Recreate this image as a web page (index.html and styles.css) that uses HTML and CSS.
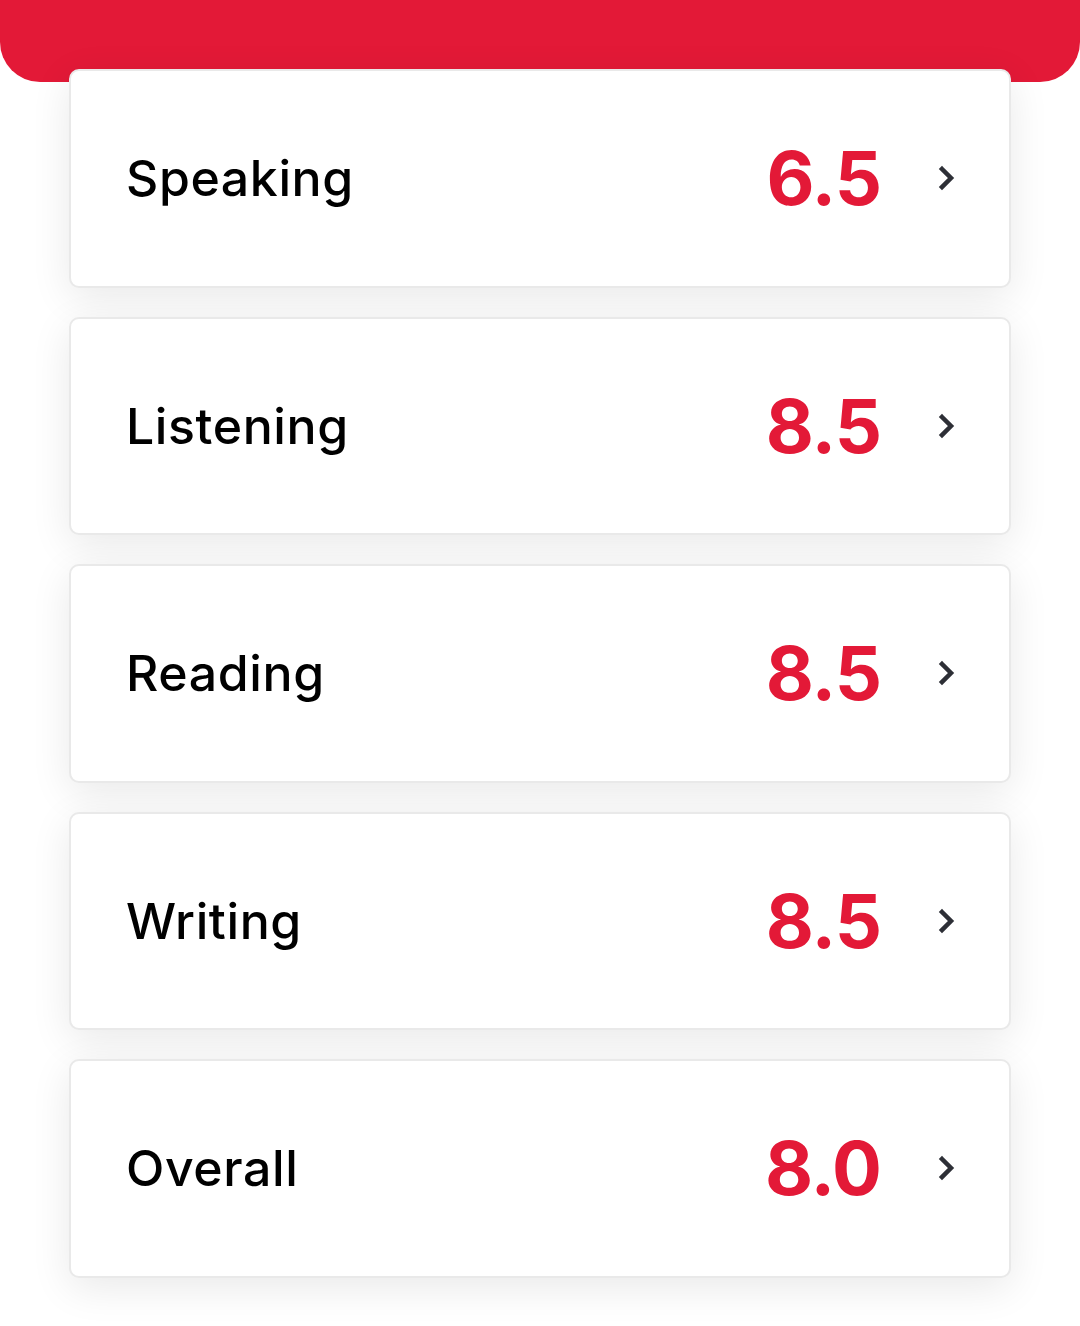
FILE: index.html
```html
<!DOCTYPE html>
<html lang="en">
<head>
    <meta charset="UTF-8">
    <meta name="viewport" content="width=device-width, initial-scale=1.0">
    <title>Band Scores</title>
    <link rel="stylesheet" href="styles.css">
</head>
<body>
    <div class="top-bar"></div>

    <div class="score-list">
        <div class="score-card">
            <span class="skill">Speaking</span>
            <span class="band">6.5</span>
            <svg class="chevron" viewBox="0 0 20 26"><polyline points="5,4 14,13 5,22"/></svg>
        </div>
        <div class="score-card">
            <span class="skill">Listening</span>
            <span class="band">8.5</span>
            <svg class="chevron" viewBox="0 0 20 26"><polyline points="5,4 14,13 5,22"/></svg>
        </div>
        <div class="score-card">
            <span class="skill">Reading</span>
            <span class="band">8.5</span>
            <svg class="chevron" viewBox="0 0 20 26"><polyline points="5,4 14,13 5,22"/></svg>
        </div>
        <div class="score-card">
            <span class="skill">Writing</span>
            <span class="band">8.5</span>
            <svg class="chevron" viewBox="0 0 20 26"><polyline points="5,4 14,13 5,22"/></svg>
        </div>
        <div class="score-card">
            <span class="skill">Overall</span>
            <span class="band">8.0</span>
            <svg class="chevron" viewBox="0 0 20 26"><polyline points="5,4 14,13 5,22"/></svg>
        </div>
    </div>
</body>
</html>
```

FILE: styles.css
```css
* {
    margin: 0;
    padding: 0;
    box-sizing: border-box;
}

body {
    background: #ffffff;
    font-family: 'Inter', 'Liberation Sans', sans-serif;
    width: 1080px;
    height: 1326px;
    overflow: hidden;
}

.top-bar {
    height: 82px;
    background: #e31937;
    border-radius: 0 0 40px 40px;
}

.score-list {
    margin-top: -13px;
    padding: 0 69px;
    display: flex;
    flex-direction: column;
    gap: 29px;
    position: relative;
}

.score-card {
    height: 218.5px;
    background: #ffffff;
    border: 2px solid #e9e9e9;
    border-radius: 10px;
    box-shadow: 0 10px 40px rgba(0, 0, 0, 0.09);
    display: flex;
    align-items: center;
    padding: 0 52px 0 55px;
}

.skill {
    flex: 1;
    font-size: 50px;
    font-weight: 500;
    color: #000000;
    letter-spacing: 0.6px;
}

.band {
    font-size: 74px;
    font-weight: 700;
    color: #e31937;
    letter-spacing: -1px;
    margin-right: 56px;
}

.chevron {
    width: 20px;
    height: 26px;
    fill: none;
    stroke: #2d2f36;
    stroke-width: 4.5;
    stroke-linecap: square;
    stroke-linejoin: miter;
}
```
